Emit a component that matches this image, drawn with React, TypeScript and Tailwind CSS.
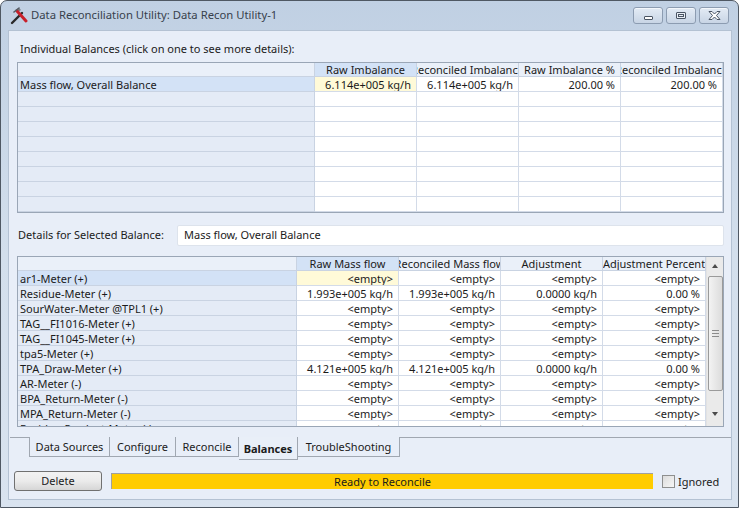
const topCols = [
  { label: "Raw Imbalance", w: "w-[102px]" },
  { label: "Reconciled Imbalance", w: "w-[102px]" },
  { label: "Raw Imbalance %", w: "w-[102px]" },
  { label: "Reconciled Imbalance", w: "w-[102px]" },
];

const bottomCols = [
  { label: "Raw Mass flow", w: "w-[102px]" },
  { label: "Reconciled Mass flow", w: "w-[102px]" },
  { label: "Adjustment", w: "w-[102px]" },
  { label: "Adjustment Percent", w: "w-[103px]" },
];

const tabs = [
  { label: "Data Sources", w: "w-[81px]" },
  { label: "Configure", w: "w-[66px]" },
  { label: "Reconcile", w: "w-[63px]" },
  { label: "Balances", w: "w-[59px]" },
  { label: "TroubleShooting", w: "w-[102px]" },
];

const E = "<empty>";
const bottomRows = [
  { name: "ar1-Meter (+)", vals: [E, E, E, E] },
  { name: "Residue-Meter (+)", vals: ["1.993e+005 kg/h", "1.993e+005 kg/h", "0.0000 kg/h", "0.00 %"] },
  { name: "SourWater-Meter @TPL1 (+)", vals: [E, E, E, E] },
  { name: "TAG__FI1016-Meter (+)", vals: [E, E, E, E] },
  { name: "TAG__FI1045-Meter (+)", vals: [E, E, E, E] },
  { name: "tpa5-Meter (+)", vals: [E, E, E, E] },
  { name: "TPA_Draw-Meter (+)", vals: ["4.121e+005 kg/h", "4.121e+005 kg/h", "0.0000 kg/h", "0.00 %"] },
  { name: "AR-Meter (-)", vals: [E, E, E, E] },
  { name: "BPA_Return-Meter (-)", vals: [E, E, E, E] },
  { name: "MPA_Return-Meter (-)", vals: [E, E, E, E] },
  { name: "Residue-Product-Meter (-)", vals: [E, E, E, E] },
];

function HeaderCell({ label, w, active }: { label: string; w: string; active?: boolean }) {
  return (
    <div
      className={`flex h-[14px] shrink-0 items-center justify-center overflow-hidden whitespace-nowrap border-r border-b border-[#c9d3e2] leading-none ${w} ${
        active ? "bg-[#d3e2f6]" : "bg-[#eaf0f9]"
      }`}
    >
      {label}
    </div>
  );
}

function DataRow({
  name,
  vals,
  nameW,
  cols,
  selected,
}: {
  name: string;
  vals: string[];
  nameW: string;
  cols: { w: string }[];
  selected?: boolean;
}) {
  return (
    <div className="flex h-[15px] shrink-0">
      <div
        className={`flex shrink-0 items-center overflow-hidden whitespace-nowrap border-r border-b border-[#c9d3e2] pl-[2px] leading-none ${nameW} ${
          selected ? "bg-[#d3e2f6]" : "bg-[#e4ebf6]"
        }`}
      >
        {name}
      </div>
      {cols.map((c, i) => (
        <div
          key={i}
          className={`flex shrink-0 items-center justify-end overflow-hidden whitespace-nowrap border-r border-b border-[#d3dbe8] pr-[5px] leading-none ${c.w} ${
            selected && i === 0 ? "bg-[#fffad8]" : "bg-white"
          }`}
        >
          {vals[i]}
        </div>
      ))}
    </div>
  );
}

function WinButton({ children }: { children: React.ReactNode }) {
  return (
    <div className="flex h-[17px] w-[30px] items-center justify-center rounded-[3px] border border-[#8c9cb1] bg-gradient-to-b from-[#e3ebf5] to-[#c8d5e5] shadow-[inset_0_1px_0_#f4f7fb]">
      {children}
    </div>
  );
}

export default function App() {
  return (
    <div className="h-[508px] w-[739px] bg-white font-['Noto_Sans',sans-serif] text-[11px] text-[#1b1b1b]">
      <div className="flex h-full flex-col rounded-t-[7px] border border-[#4f5863] bg-gradient-to-b from-[#c0d0e3] via-[#d3dfec] to-[#d9e3ef] pr-[6px] pb-[7px] pl-[7px]">
        {/* title bar */}
        <div className="flex h-[29px] shrink-0 items-center">
          <svg width="18" height="18" viewBox="0 0 18 18" className="ml-[2px]">
            <path d="M2 16 L12 6" stroke="#2a2a2a" strokeWidth="2.4" strokeLinecap="round" />
            <path d="M5 3 L9 1 L11 3 L8 5 Z" fill="#7a7f86" />
            <path d="M7 4 L16 14" stroke="#c8202a" strokeWidth="3" strokeLinecap="round" />
            <path d="M4 5 L9 1" stroke="#555b63" strokeWidth="1.6" strokeLinecap="round" />
          </svg>
          <span className="ml-[3px] text-[11.3px] text-[#38414c]">Data Reconciliation Utility: Data Recon Utility-1</span>
          <div className="ml-auto mr-[3px] flex gap-[3px]">
            <WinButton>
              <div className="mt-[5px] h-[4px] w-[9px] rounded-[1px] border border-[#4a5564] bg-white" />
            </WinButton>
            <WinButton>
              <div className="h-[7px] w-[10px] rounded-[1px] border border-[#4a5564] bg-[#e9eef5] p-[1px]">
                <div className="h-[3px] w-full border border-[#4a5564]" />
              </div>
            </WinButton>
            <WinButton>
              <svg width="13" height="9" viewBox="0 0 13 9">
                <path
                  d="M1 0.5 H4 L6.5 3 L9 0.5 H12 L8.5 4.5 L12 8.5 H9 L6.5 6 L4 8.5 H1 L4.5 4.5 Z"
                  fill="#fff"
                  stroke="#4a5564"
                  strokeWidth="1"
                  strokeLinejoin="round"
                />
              </svg>
            </WinButton>
          </div>
        </div>

        {/* client area */}
        <div className="flex flex-1 flex-col border border-[#b4c2d3] bg-[#e8eef8]">
          <div className="mt-[10px] h-[15px] pl-[11px] leading-[15px]">
            Individual Balances (click on one to see more details):
          </div>

          {/* top grid */}
          <div className="mt-[6px] ml-[8px] w-[707px] border border-[#9aa6b6] bg-white">
            <div className="flex">
              <HeaderCell label="" w="w-[297px]" />
              {topCols.map((c, i) => (
                <HeaderCell key={i} label={c.label} w={c.w} active={i === 0} />
              ))}
            </div>
            <DataRow
              name="Mass flow, Overall Balance"
              vals={["6.114e+005 kg/h", "6.114e+005 kg/h", "200.00 %", "200.00 %"]}
              nameW="w-[297px]"
              cols={topCols}
              selected
            />
            {Array.from({ length: 8 }).map((_, i) => (
              <DataRow key={i} name="" vals={["", "", "", ""]} nameW="w-[297px]" cols={topCols} />
            ))}
          </div>

          {/* details */}
          <div className="mt-[12px] flex h-[21px] items-center">
            <span className="ml-[9px] w-[151px]">Details for Selected Balance:</span>
            <div className="ml-[8px] flex h-[21px] w-[547px] items-center rounded-[2px] border border-[#dde3ec] bg-white pl-[6px]">
              Mass flow, Overall Balance
            </div>
          </div>

          {/* bottom grid */}
          <div className="mt-[10px] ml-[8px] flex h-[171px] w-[707px] overflow-hidden border border-[#9aa6b6] bg-white">
            <div className="flex flex-col">
              <div className="flex shrink-0">
                <HeaderCell label="" w="w-[279px]" />
                {bottomCols.map((c, i) => (
                  <HeaderCell key={i} label={c.label} w={c.w} active={i === 0} />
                ))}
              </div>
              {bottomRows.map((r, i) => (
                <DataRow key={i} name={r.name} vals={r.vals} nameW="w-[279px]" cols={bottomCols} selected={i === 0} />
              ))}
            </div>
            {/* scrollbar */}
            <div className="flex w-[17px] shrink-0 flex-col items-center border-l border-[#e2e2e2] bg-[#eaeaea]">
              <div className="flex h-[17px] w-full items-center justify-center">
                <div className="h-0 w-0 border-x-[3.5px] border-b-[4px] border-x-transparent border-b-[#4a4a4a]" />
              </div>
              <div className="mt-[2px] flex h-[115px] w-[15px] flex-col items-center justify-center gap-[2px] rounded-[2px] border border-[#9a9a9a] bg-gradient-to-r from-[#f3f3f3] to-[#dcdcdc]">
                <div className="h-px w-[7px] bg-[#8c8c8c]" />
                <div className="h-px w-[7px] bg-[#8c8c8c]" />
                <div className="h-px w-[7px] bg-[#8c8c8c]" />
              </div>
              <div className="flex-1" />
              <div className="mb-[6px] flex h-[12px] w-full items-center justify-center">
                <div className="h-0 w-0 border-x-[3.5px] border-t-[4px] border-x-transparent border-t-[#4a4a4a]" />
              </div>
            </div>
          </div>

          {/* tabs */}
          <div className="mt-[10px] ml-[1px] flex h-[23px] shrink-0 border-t border-[#a0a7b1] pl-[19px]">
            {tabs.map((t) => {
              const sel = t.label === "Balances";
              return (
                <div
                  key={t.label}
                  className={`-mt-px flex shrink-0 items-center justify-center whitespace-nowrap border-r border-[#a0a7b1] pt-[2px] first:border-l ${t.w} ${
                    sel ? "h-[23px] border-b bg-[#e9eff8] font-bold" : "h-[20px] border-b bg-[#e8eef8]"
                  }`}
                >
                  {t.label}
                </div>
              );
            })}
          </div>

          {/* bottom row */}
          <div className="mt-[11px] flex h-[20px] items-center">
            <div className="ml-[5px] flex h-[20px] w-[88px] items-center justify-center rounded-[3px] border border-[#707070] bg-gradient-to-b from-[#f2f2f2] via-[#ebebeb] to-[#d6d6d6]">
              Delete
            </div>
            <div className="ml-[9px] flex h-[16px] w-[542px] items-center justify-center border-t border-l border-[#a0a0a0] bg-[#ffcc00] leading-none">
              Ready to Reconcile
            </div>
            <div className="ml-[9px] h-[13px] w-[13px] border border-[#8e8f8f] bg-gradient-to-br from-[#dcdcdc] to-[#f7f7f7]" />
            <span className="ml-[3px] mt-[2px]">Ignored</span>
          </div>
        </div>
      </div>
    </div>
  );
}
